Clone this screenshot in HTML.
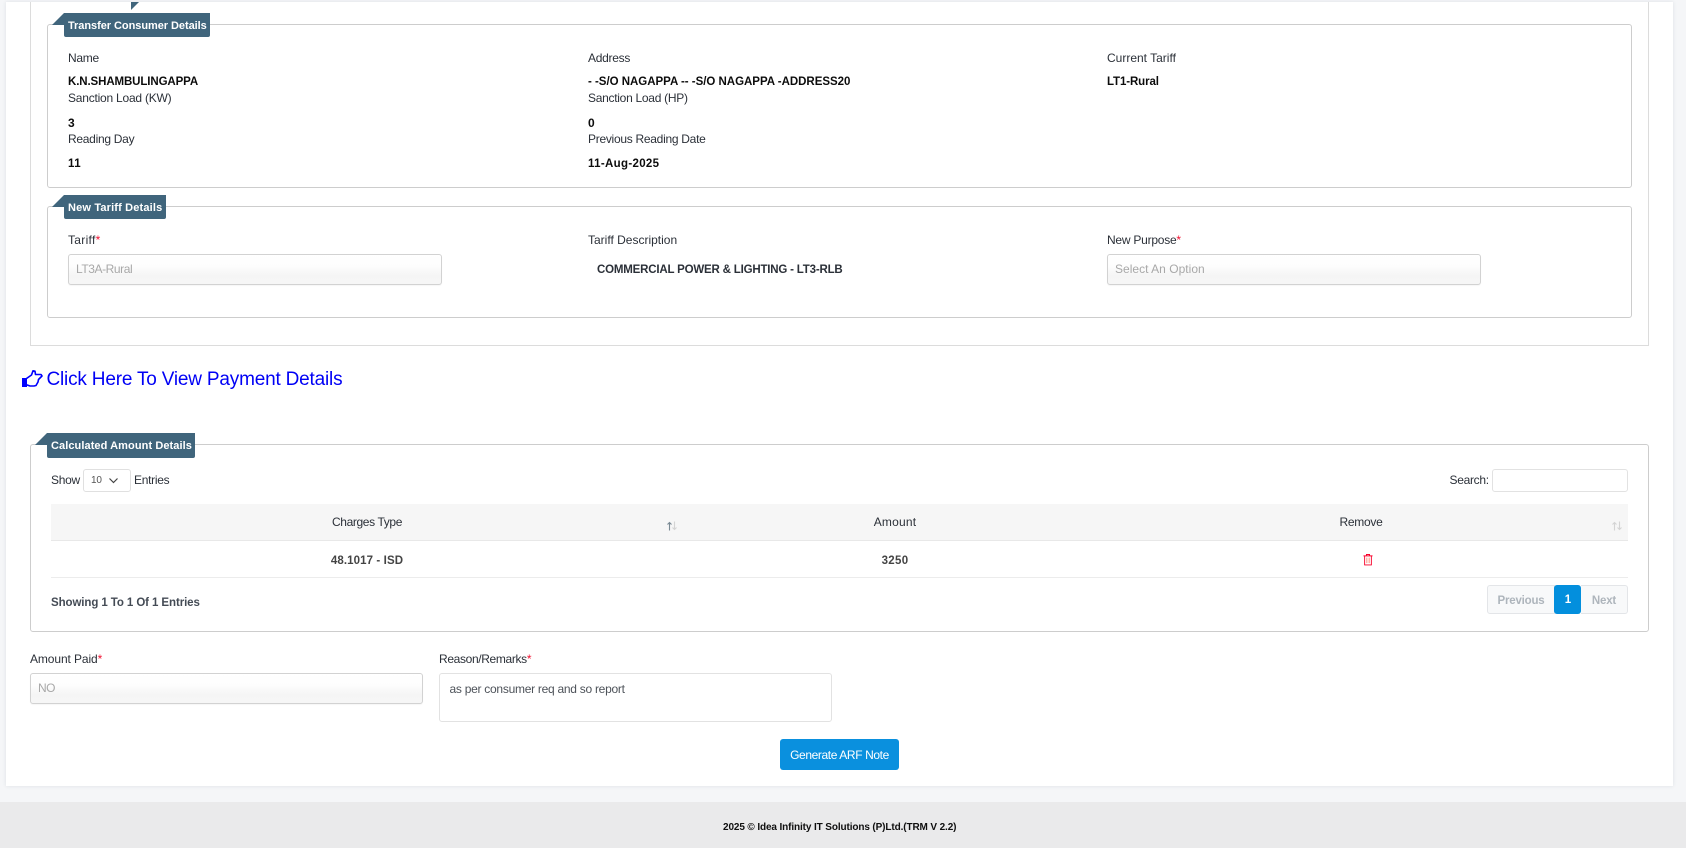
<!DOCTYPE html>
<html lang="en"><head><meta charset="utf-8"><title>Generate ARF Note</title>
<style>
*{box-sizing:border-box}
html,body{margin:0;padding:0;width:1686px;height:848px;overflow:hidden;background:#f5f6f8;font-family:"Liberation Sans",sans-serif;color:#212529}
.a{position:absolute}
.t{position:absolute;white-space:nowrap;line-height:16px;height:16px;font-size:12px;letter-spacing:-.28px;color:#2b3038}
.b{font-weight:bold;color:#0c0c0c;font-size:11.5px;letter-spacing:-.11px;margin-top:1px}
.fs{position:absolute;border:1px solid #cdcdcd;border-radius:3px}
.lg{position:absolute;background:#40657c;border-radius:0 0 2px 2px;color:#fff;font-weight:bold;font-size:11px;letter-spacing:-.08px;line-height:26px;white-space:nowrap;padding-left:4px}
.tri{position:absolute;width:12px;height:12px;background:#40657c;clip-path:polygon(100% 0,100% 100%,0 100%)}
.inp{position:absolute;border:1px solid #d2d2d2;border-radius:3px;background:linear-gradient(#fff 0,#fdfdfd 40%,#f5f5f5 70%,#f6f6f6 100%);box-shadow:0 1px 1px rgba(0,0,0,.04);height:31px;color:#a8a8a8;font-size:12px;letter-spacing:-.2px;line-height:29px;padding-left:7px;white-space:nowrap}
.r{color:#f01030}
.th{text-align:center;transform:translateX(-50%)}
</style></head><body>
<div class="a" style="left:6px;top:2px;width:1667px;height:784px;background:#fff;box-shadow:0 0 4px rgba(60,70,90,.12)"></div>
<div class="a" style="left:0;top:802px;width:1686px;height:46px;background:#eaeaeb"></div>

<!-- outer box -->
<div class="a" style="left:30px;top:2px;width:1619px;height:344px;border:1px solid #dcdcdc;border-top:0"></div>
<div class="a" style="left:131px;top:2px;width:8px;height:8px;background:#40657c;clip-path:polygon(0 0,100% 0,0 100%)"></div>

<!-- Transfer Consumer Details -->
<div class="fs" style="left:47px;top:24px;width:1585px;height:164px"></div>
<div class="tri" style="left:52px;top:13px"></div>
<div class="lg" style="left:64px;top:13px;width:146px;height:24px;letter-spacing:-.05px">Transfer Consumer Details</div>
<div class="t" style="left:68px;top:50px">Name</div>
<div class="t" style="left:588px;top:50px">Address</div>
<div class="t" style="left:1107px;top:50px;letter-spacing:0">Current Tariff</div>
<div class="t b" style="left:68px;top:73px">K.N.SHAMBULINGAPPA</div>
<div class="t b" style="left:588px;top:73px;letter-spacing:-.02px">- -S/O NAGAPPA -- -S/O NAGAPPA -ADDRESS20</div>
<div class="t b" style="left:1107px;top:73px;letter-spacing:-.11px">LT1-Rural</div>
<div class="t" style="left:68px;top:90px;letter-spacing:-.22px">Sanction Load (KW)</div>
<div class="t" style="left:588px;top:90px">Sanction Load (HP)</div>
<div class="t b" style="left:68px;top:114px;font-size:12px">3</div>
<div class="t b" style="left:588px;top:114px;font-size:12px">0</div>
<div class="t" style="left:68px;top:131px">Reading Day</div>
<div class="t" style="left:588px;top:131px">Previous Reading Date</div>
<div class="t b" style="left:68px;top:155px;letter-spacing:.5px">11</div>
<div class="t b" style="left:588px;top:155px;letter-spacing:.33px">11-Aug-2025</div>

<!-- New Tariff Details -->
<div class="fs" style="left:47px;top:206px;width:1585px;height:112px"></div>
<div class="tri" style="left:52px;top:195px"></div>
<div class="lg" style="left:64px;top:195px;width:102px;height:24px;letter-spacing:.16px">New Tariff Details</div>
<div class="t" style="left:68px;top:232px;letter-spacing:.3px">Tariff<span class="r">*</span></div>
<div class="t" style="left:588px;top:232px;letter-spacing:0">Tariff Description</div>
<div class="t" style="left:1107px;top:232px;letter-spacing:-.24px">New Purpose<span class="r">*</span></div>
<div class="inp" style="left:68px;top:254px;width:374px;letter-spacing:-.42px">LT3A-Rural</div>
<div class="t" style="left:597px;top:262px;font-weight:bold;font-size:11.5px;letter-spacing:-.19px;color:#2b3038">COMMERCIAL POWER &amp; LIGHTING - LT3-RLB</div>
<div class="inp" style="left:1107px;top:254px;width:374px;letter-spacing:.02px">Select An Option</div>

<!-- link -->
<svg class="a" style="left:21px;top:369px" width="22" height="19" viewBox="0 0 22 19"><path d="M1.5 9.5h4v8h-4z" fill="#00f" stroke="#00f" stroke-width="1"/><path d="M5.5 9.5l5-3.5 1.5-4.2 2 .4.5 3.3h5.5l1 1.5-3.5 3.5-.5 2.5-2 3.5-2 .5h-4l-3.5-1.2" fill="none" stroke="#00f" stroke-width="1.6" stroke-linejoin="round"/></svg>
<div class="t" style="left:46.5px;top:368px;font-size:19px;line-height:24px;height:24px;letter-spacing:-.19px;color:#0000f5">Click Here To View Payment Details</div>

<!-- Calculated Amount -->
<div class="fs" style="left:30px;top:444px;width:1619px;height:188px"></div>
<div class="tri" style="left:35px;top:433px"></div>
<div class="lg" style="left:47px;top:433px;width:148px;height:25px;line-height:27px;letter-spacing:.08px">Calculated Amount Details</div>
<div class="t" style="left:51px;top:472px">Show</div>
<div class="a" style="left:83px;top:469px;width:48px;height:23px;border:1px solid #e0e0e0;border-radius:3px"></div>
<div class="t" style="left:91px;top:473px;font-size:10px;letter-spacing:-.2px;color:#555">10</div>
<svg class="a" style="left:108px;top:477px" width="11" height="7" viewBox="0 0 11 7"><path d="M1.5 1.5L5.5 5.5L9.5 1.5" fill="none" stroke="#444" stroke-width="1.2"/></svg>
<div class="t" style="left:134px;top:472px">Entries</div>
<div class="t" style="left:1449.5px;top:472px;font-size:12px;letter-spacing:-.3px">Search:</div>
<div class="a" style="left:1492px;top:469px;width:136px;height:23px;border:1px solid #e2e2e2;border-radius:3px"></div>

<div class="a" style="left:51px;top:504px;width:1577px;height:37px;background:#f6f6f6;border-bottom:1px solid #e8e8e8"></div>
<div class="t th" style="left:367px;top:514px;letter-spacing:-.37px">Charges Type</div>
<div class="t th" style="left:895px;top:514px;letter-spacing:.2px">Amount</div>
<div class="t th" style="left:1361px;top:514px">Remove</div>
<svg class="a" style="left:665px;top:521px" width="14" height="10" viewBox="0 0 14 10"><path d="M4.5 9.5V1.5M2.5 3.5L4.5 1.5L6.5 3.5" fill="none" stroke="#7a8a94" stroke-width="1.1"/><path d="M9.5 .5V8.5M7.5 6.5L9.5 8.5L11.5 6.5" fill="none" stroke="#d4d4d4" stroke-width="1.1"/></svg>
<svg class="a" style="left:1610px;top:521px" width="14" height="10" viewBox="0 0 14 10"><path d="M4.5 9.5V1.5M2.5 3.5L4.5 1.5L6.5 3.5" fill="none" stroke="#d4d4d4" stroke-width="1.1"/><path d="M9.5 .5V8.5M7.5 6.5L9.5 8.5L11.5 6.5" fill="none" stroke="#d4d4d4" stroke-width="1.1"/></svg>

<div class="t th" style="left:367px;top:553px;font-weight:bold;font-size:11.5px;letter-spacing:.1px;color:#444">48.1017 - ISD</div>
<div class="t th" style="left:895px;top:553px;font-weight:bold;font-size:11.5px;letter-spacing:.3px;color:#444">3250</div>
<svg class="a" style="left:1362.5px;top:553px" width="10" height="13" viewBox="0 0 11 13"><path d="M.5 2.5h10M3.8 2.5V1h3.4v1.5M1.8 2.5v10h7.4v-10" fill="none" stroke="#f8002a" stroke-width="1"/><path d="M4 4.5v6M5.5 4.5v6M7 4.5v6" stroke="#f98" stroke-width=".8"/></svg>
<div class="a" style="left:51px;top:577px;width:1577px;height:1px;background:#ececec"></div>
<div class="t" style="left:51px;top:595px;font-weight:bold;font-size:11.5px;letter-spacing:-.09px;color:#444b55">Showing 1 To 1 Of 1 Entries</div>

<div class="a" style="left:1487px;top:585px;width:68px;height:29px;background:#f8f9fa;border:1px solid #e3e5e8;border-radius:3px 0 0 3px;text-align:center;font-weight:bold;font-size:11.5px;letter-spacing:-.2px;line-height:30px;color:#aeb5bc">Previous</div>
<div class="a" style="left:1554px;top:585px;width:27px;height:29px;background:#038fdd;border-radius:3px;text-align:center;font-weight:bold;font-size:11.5px;line-height:31px;padding-left:1px;color:#fff">1</div>
<div class="a" style="left:1581px;top:585px;width:47px;height:29px;background:#f8f9fa;border:1px solid #e3e5e8;border-left:0;border-radius:0 3px 3px 0;text-align:center;font-weight:bold;font-size:11.5px;letter-spacing:-.2px;line-height:30px;color:#aeb5bc">Next</div>

<!-- form bottom -->
<div class="t" style="left:30px;top:651px;letter-spacing:-.1px">Amount Paid<span class="r">*</span></div>
<div class="inp" style="left:30px;top:673px;width:393px;letter-spacing:-.5px">NO</div>
<div class="t" style="left:439px;top:651px;letter-spacing:-.35px">Reason/Remarks<span class="r">*</span></div>
<div class="a" style="left:439px;top:673px;width:393px;height:49px;border:1px solid #e2e2e2;border-radius:3px"></div>
<div class="t" style="left:449.5px;top:681px;font-size:12px;letter-spacing:-.27px;color:#4d5259">as per consumer req and so report</div>
<div class="a" style="left:780px;top:739px;width:119px;height:31px;background:#0a90de;border-radius:3px;color:#fff;text-align:center;font-size:12px;letter-spacing:-.39px;line-height:33px">Generate ARF Note</div>

<div class="t" style="left:723px;top:820px;font-weight:bold;font-size:10px;letter-spacing:-.12px;color:#0f0f0f">2025 © Idea Infinity IT Solutions (P)Ltd.(TRM V 2.2)</div>
</body></html>
